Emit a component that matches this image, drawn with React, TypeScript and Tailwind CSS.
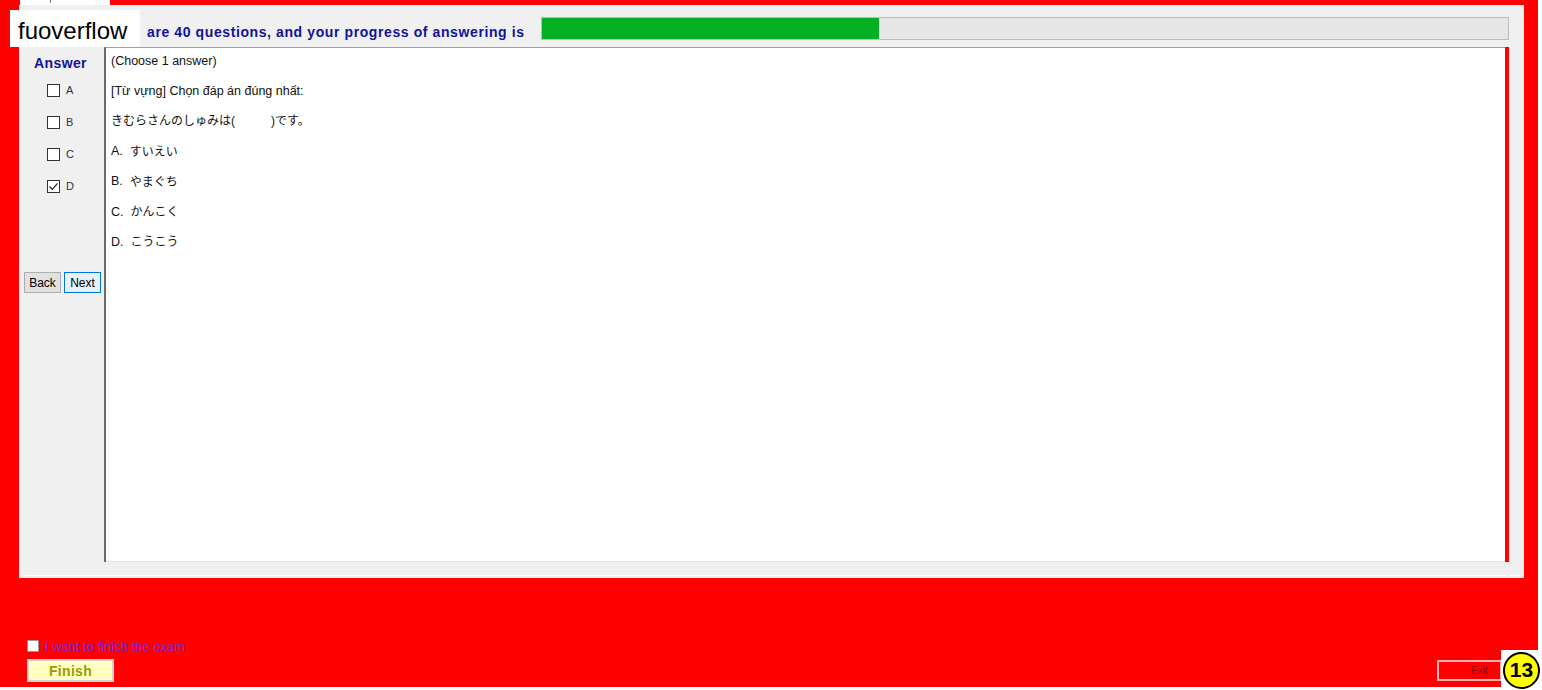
import type { ReactNode } from 'react';

const OPTIONS = ['A', 'B', 'C', 'D'];
const CHECKED = 'D';

function Box({ checked }: { checked?: boolean }) {
  return (
    <span className="flex h-[13px] w-[13px] items-center justify-center border border-[#333333] bg-white">
      {checked && (
        <svg width="11" height="11" viewBox="0 0 11 11">
          <path d="M1.5 5.5 L4.3 8.3 L9.5 2.3" fill="none" stroke="#222" strokeWidth="1.2" />
        </svg>
      )}
    </span>
  );
}

function Btn({ children, active }: { children: ReactNode; active?: boolean }) {
  return (
    <button
      type="button"
      className={
        active
          ? 'h-[21px] w-[37px] border border-[#0078d7] bg-[#e5f1fb] text-[12px] text-black'
          : 'h-[21px] w-[37px] border border-[#adadad] bg-[#e1e1e1] text-[12px] text-black'
      }
    >
      {children}
    </button>
  );
}

function Line({ children }: { children: ReactNode }) {
  return <div className="flex h-[30.2px] items-center whitespace-pre text-[12.5px] text-[#111]">{children}</div>;
}

export default function App() {
  const progress = 338 / 968;

  return (
    <div className="relative h-[690px] w-[1542px] overflow-hidden bg-white font-['Liberation_Sans','Noto_Sans_CJK_JP',Arial,sans-serif]">
      <div className="flex h-[687px] w-[1538px] flex-col bg-[#ff0000]">
        {/* tab stub */}
        <div className="ml-[20px] h-[5px] w-[90px] bg-white">
          <div className="ml-[30px] h-[3px] w-px bg-[#777]" />
        </div>

        {/* exam panel */}
        <div className="ml-[19px] flex h-[573px] w-[1505px] flex-col bg-[#f0f0f0]">
          <div className="flex h-[42px] items-center pr-[15px] pt-[5px]">
            {/* leading "There" sits under the watermark in the original */}
            <span className="pl-[128px] pt-[7px] text-[14px] font-bold tracking-[0.6px] text-[#12129a]">
              are 40 questions, and your progress of answering is
            </span>
            <div className="ml-auto h-[23px] w-[968px] border border-[#bcbcbc] bg-[#e6e6e6]">
              <div className="h-full bg-[#06b025]" style={{ width: `${progress * 100}%` }} />
            </div>
          </div>

          <div className="flex h-[515px]">
            {/* answer column */}
            <div className="flex w-[85px] flex-col">
              <div className="pb-[3px] pl-[15px] pt-[8px] text-[14px] font-bold leading-[16px] tracking-[0.4px] text-[#12129a]">
                Answer
              </div>
              {OPTIONS.map((o) => (
                <div key={o} className="flex h-[32px] items-center gap-[6px] pl-[28px]">
                  <Box checked={o === CHECKED} />
                  <span className="text-[11px] text-[#333]">{o}</span>
                </div>
              ))}
              <div className="mt-[70px] flex gap-[3px] pl-[5px]">
                <Btn>Back</Btn>
                <Btn active>Next</Btn>
              </div>
            </div>

            {/* question content */}
            <div className="flex w-[1401px] flex-col border-l-2 border-t border-l-[#6a6a6a] border-t-[#a0a0a0] bg-white">
              <div className="mt-[-2px] pl-[5px]">
                <Line>(Choose 1 answer)</Line>
                <Line>[Từ vựng] Chọn đáp án đúng nhất:</Line>
                <Line>
                  <span className="text-[12px]">きむらさんのしゅみは(</span>
                  <span className="inline-block w-[36px]" />
                  <span className="text-[12px]">)です。</span>
                </Line>
                <Line>A.  <span className="text-[12px]">すいえい</span></Line>
                <Line>B.  <span className="text-[12px]">やまぐち</span></Line>
                <Line>C.  <span className="text-[12px]">かんこく</span></Line>
                <Line>D.  <span className="text-[12px]">こうこう</span></Line>
              </div>
              <div className="mt-auto h-px bg-[#e3e3e3]" />
            </div>
            <div className="w-[4px] bg-[#ff0000]" />
          </div>

          <div className="flex flex-1 flex-col justify-end">
            <div className="mb-[2px] ml-[4px] h-px w-[1497px] bg-white" />
          </div>
        </div>

        {/* bottom controls */}
        <div className="mt-auto flex items-end justify-between pb-[5px] pl-[27px] pr-[36px]">
          <div className="flex flex-col gap-[7px]">
            <label className="flex h-[13px] items-center gap-[6px]">
              <span className="h-[12px] w-[12px] rounded-[1px] border border-[#999] bg-white" />
              <span className="mt-[3px] text-[13px] text-[#7b2ad6]">I want to finish the exam</span>
            </label>
            <button
              type="button"
              className="h-[23px] w-[87px] border-2 border-[#d2d2d2] bg-[#ffffc2] text-[14px] font-bold tracking-[0.3px] text-[#9a9a00]"
            >
              Finish
            </button>
          </div>
          <button
            type="button"
            className="mb-[1px] flex h-[21px] w-[65px] items-center justify-center border-2 border-[#ffb4b4] bg-[#ff0000] pl-[20px] text-[10px] text-[#880000]"
          >
            Exit
          </button>
        </div>
      </div>

      {/* watermark */}
      <div className="absolute left-[10px] top-[10px] flex h-[37px] w-[130px] items-center bg-white pl-[8px] pt-[5px] text-[24px] text-black">
        fuoverflow
      </div>

      {/* question number badge */}
      <div className="absolute bottom-0 right-0 flex h-[40px] w-[41px] items-center justify-center bg-white">
        <div className="flex h-[37px] w-[37px] items-center justify-center rounded-full border-2 border-black bg-[#ffff00] text-[21px] font-bold text-black">
          13
        </div>
      </div>
    </div>
  );
}
